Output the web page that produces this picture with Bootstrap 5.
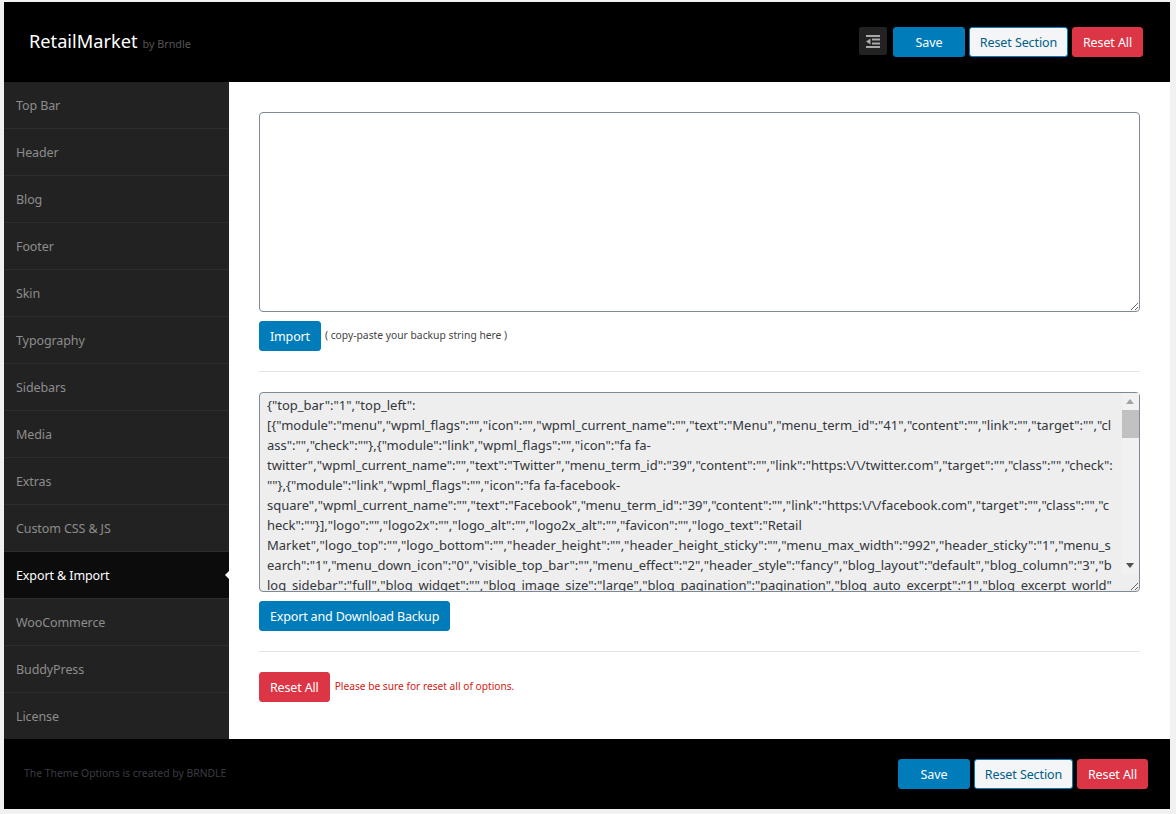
<!DOCTYPE html>
<html lang="en">
<head>
<meta charset="utf-8">
<title>RetailMarket Theme Options</title>
<link href="https://cdn.jsdelivr.net/npm/bootstrap@5.3.0/dist/css/bootstrap.min.css" rel="stylesheet">
<style>
html,body{height:100%}
body{background:#f1f1f1;font-family:"Noto Sans","Open Sans",sans-serif;font-size:13px;color:#444}
.opt-shell{width:1166px;margin:2px 0 0 4px}
.opt-bar{position:relative;background-color:#000;background-image:radial-gradient(circle at 1px 1px,#161616 .7px,transparent .7px);background-size:4px 4px}
.opt-bar-top{height:80px;padding:25px 27px 25px 25px}
.opt-bar-bottom{height:70px;padding:20px 22px 20px 20px}
.opt-bar::before{content:"";position:absolute;inset:0;background:linear-gradient(#000 50%,rgba(0,0,0,.1) 80%)}
.opt-bar>*{position:relative}
.opt-brand{font-size:18.2px;color:#fff;line-height:29px}
.opt-by{font-size:10.8px;color:#555;margin-left:5px}
.opt-credit{font-size:10.4px;color:#3c3c44;line-height:28px}
.opt-btn,.opt-action{height:30px;padding:0;font-size:12.5px;letter-spacing:-.1px;line-height:30px;border-radius:3px;border:1px solid transparent;white-space:nowrap}
.opt-action{padding:0 10px;letter-spacing:-.16px}
.opt-blue{background:#007cba;border-color:#007cba;color:#fff}
.opt-blue:hover{background:#006ba1;color:#fff}
.opt-white{background:#f3f5f6;border-color:#007cba;color:#016087}
.opt-red{background:#dc3545;border-color:#dc3545;color:#fff}
.opt-wide{width:72px}
.opt-sec{width:99px}
.opt-resetbtn{width:71px}
.opt-toggle{width:28px;height:28px;background:#222;border-radius:2px;margin-right:2px}
.opt-side{width:225px;background:#222;flex:none}
.opt-side a{display:block;height:47px;line-height:48px;padding-left:12px;color:#8d8d8d;font-size:12.5px;letter-spacing:-.1px;text-decoration:none;border-bottom:1px solid #2e2e2e}
.opt-side a:last-child{border-bottom:0;height:46px}
.opt-side a.opt-on{color:#fff;background-color:#0c0c0c}
.opt-side a.opt-on::before{background:linear-gradient(#0c0c0c 45%,rgba(12,12,12,.1) 85%)}
.opt-side a.opt-on span{position:relative}
.opt-side a.opt-on::after{content:"";position:absolute;right:-1px;top:18px;border:5px solid transparent;border-right-color:#fff;border-left:0}
.opt-main{flex:1;background:#fff;padding:30px}
.opt-area{display:block;width:881px;height:200px;padding:2px 8px;border:1px solid #7e8993;border-radius:4px;font-family:inherit;font-size:13px;line-height:20px;color:#32373c;background:#fff;outline:0}
.opt-area-ro{background-color:#eee;background-image:radial-gradient(circle at 1px 1px,#e9e9e9 .7px,transparent .7px);background-size:4px 4px;padding:2px 26px 2px 7px}
.opt-scrollwrap{position:relative;width:881px}
.opt-scroll{position:absolute;top:1px;right:1px;width:17px;height:181px;background:#f1f1f1;pointer-events:none}
.opt-thumb{display:block;height:28px;margin-top:17px;background:#c1c1c1}
.opt-arrow{position:absolute;left:4px;width:0;height:0;border:4.500px solid transparent;border-top:0;border-bottom:5px solid #a3a3a3}
.opt-arrow-up{top:6px}
.opt-arrow-down{bottom:6px;border-bottom:0;border-top:5px solid #505050}
.opt-note{font-size:10.3px;color:#444;margin-left:4px}
.opt-warn{font-size:10.2px;color:#d11a0f;margin-left:5px}
.opt-rule{width:881px;margin:20px 0;border:0;border-top:1px solid #e5e5e5;opacity:1}
.opt-row{margin-top:9px}
</style>
</head>
<body>
<div class="opt-shell">
  <header class="opt-bar opt-bar-top d-flex align-items-start justify-content-between">
    <div class="opt-brand">RetailMarket<span class="opt-by">by Brndle</span></div>
    <div class="d-flex align-items-start gap-1">
      <span class="opt-toggle d-flex align-items-center justify-content-center" aria-hidden="true">
        <svg width="14" height="13" viewBox="0 0 14 13"><path fill="#a9a9a9" d="M0 0h14v2H0zM6 3.500h8v2H6zM6 7.500h8v2H6zM0 11h14v2H0zM4.500 3.500v6L0 6.500z"/></svg>
      </span>
      <button type="button" class="btn opt-btn opt-blue opt-wide">Save</button>
      <button type="button" class="btn opt-btn opt-white opt-sec">Reset Section</button>
      <button type="button" class="btn opt-btn opt-red opt-resetbtn">Reset All</button>
    </div>
  </header>
  <div class="d-flex">
    <nav class="opt-side">
      <a href="#">Top Bar</a>
      <a href="#">Header</a>
      <a href="#">Blog</a>
      <a href="#">Footer</a>
      <a href="#">Skin</a>
      <a href="#">Typography</a>
      <a href="#">Sidebars</a>
      <a href="#">Media</a>
      <a href="#">Extras</a>
      <a href="#">Custom CSS &amp; JS</a>
      <a href="#" class="opt-on opt-bar"><span>Export &amp; Import</span></a>
      <a href="#">WooCommerce</a>
      <a href="#">BuddyPress</a>
      <a href="#">License</a>
    </nav>
    <main class="opt-main">
      <textarea class="opt-area" aria-label="Import"></textarea>
      <div class="d-flex align-items-center opt-row">
        <button type="button" class="btn opt-action opt-blue">Import</button>
        <span class="opt-note">( copy-paste your backup string here )</span>
      </div>
      <hr class="opt-rule">
      <div class="opt-scrollwrap">
        <textarea class="opt-area opt-area-ro" aria-label="Export" readonly>{"top_bar":"1","top_left":[{"module":"menu","wpml_flags":"","icon":"","wpml_current_name":"","text":"Menu","menu_term_id":"41","content":"","link":"","target":"","class":"","check":""},{"module":"link","wpml_flags":"","icon":"fa fa-twitter","wpml_current_name":"","text":"Twitter","menu_term_id":"39","content":"","link":"https:\/\/twitter.com","target":"","class":"","check":""},{"module":"link","wpml_flags":"","icon":"fa fa-facebook-square","wpml_current_name":"","text":"Facebook","menu_term_id":"39","content":"","link":"https:\/\/facebook.com","target":"","class":"","check":""}],"logo":"","logo2x":"","logo_alt":"","logo2x_alt":"","favicon":"","logo_text":"Retail Market","logo_top":"","logo_bottom":"","header_height":"","header_height_sticky":"","menu_max_width":"992","header_sticky":"1","menu_search":"1","menu_down_icon":"0","visible_top_bar":"","menu_effect":"2","header_style":"fancy","blog_layout":"default","blog_column":"3","blog_sidebar":"full","blog_widget":"","blog_image_size":"large","blog_pagination":"pagination","blog_auto_excerpt":"1","blog_excerpt_world":"30","blog_readmore":"1","blog_meta":"1","footer_layout":"4","footer_copyright":"","footer_widget":"1","skin":"default","body_font":"Roboto","heading_font":"Roboto"}</textarea>
        <div class="opt-scroll" aria-hidden="true"><span class="opt-arrow opt-arrow-up"></span><span class="opt-thumb"></span><span class="opt-arrow opt-arrow-down"></span></div>
      </div>
      <div class="opt-row"><button type="button" class="btn opt-action opt-blue">Export and Download Backup</button></div>
      <hr class="opt-rule">
      <div class="d-flex align-items-center">
        <button type="button" class="btn opt-action opt-red">Reset All</button>
        <span class="opt-warn">Please be sure for reset all of options.</span>
      </div>
    </main>
  </div>
  <footer class="opt-bar opt-bar-bottom d-flex align-items-start justify-content-between">
    <div class="opt-credit">The Theme Options is created by BRNDLE</div>
    <div class="d-flex align-items-start gap-1">
      <button type="button" class="btn opt-btn opt-blue opt-wide">Save</button>
      <button type="button" class="btn opt-btn opt-white opt-sec">Reset Section</button>
      <button type="button" class="btn opt-btn opt-red opt-resetbtn">Reset All</button>
    </div>
  </footer>
</div>
<script src="https://cdn.jsdelivr.net/npm/bootstrap@5.3.0/dist/js/bootstrap.bundle.min.js"></script>
</body>
</html>
